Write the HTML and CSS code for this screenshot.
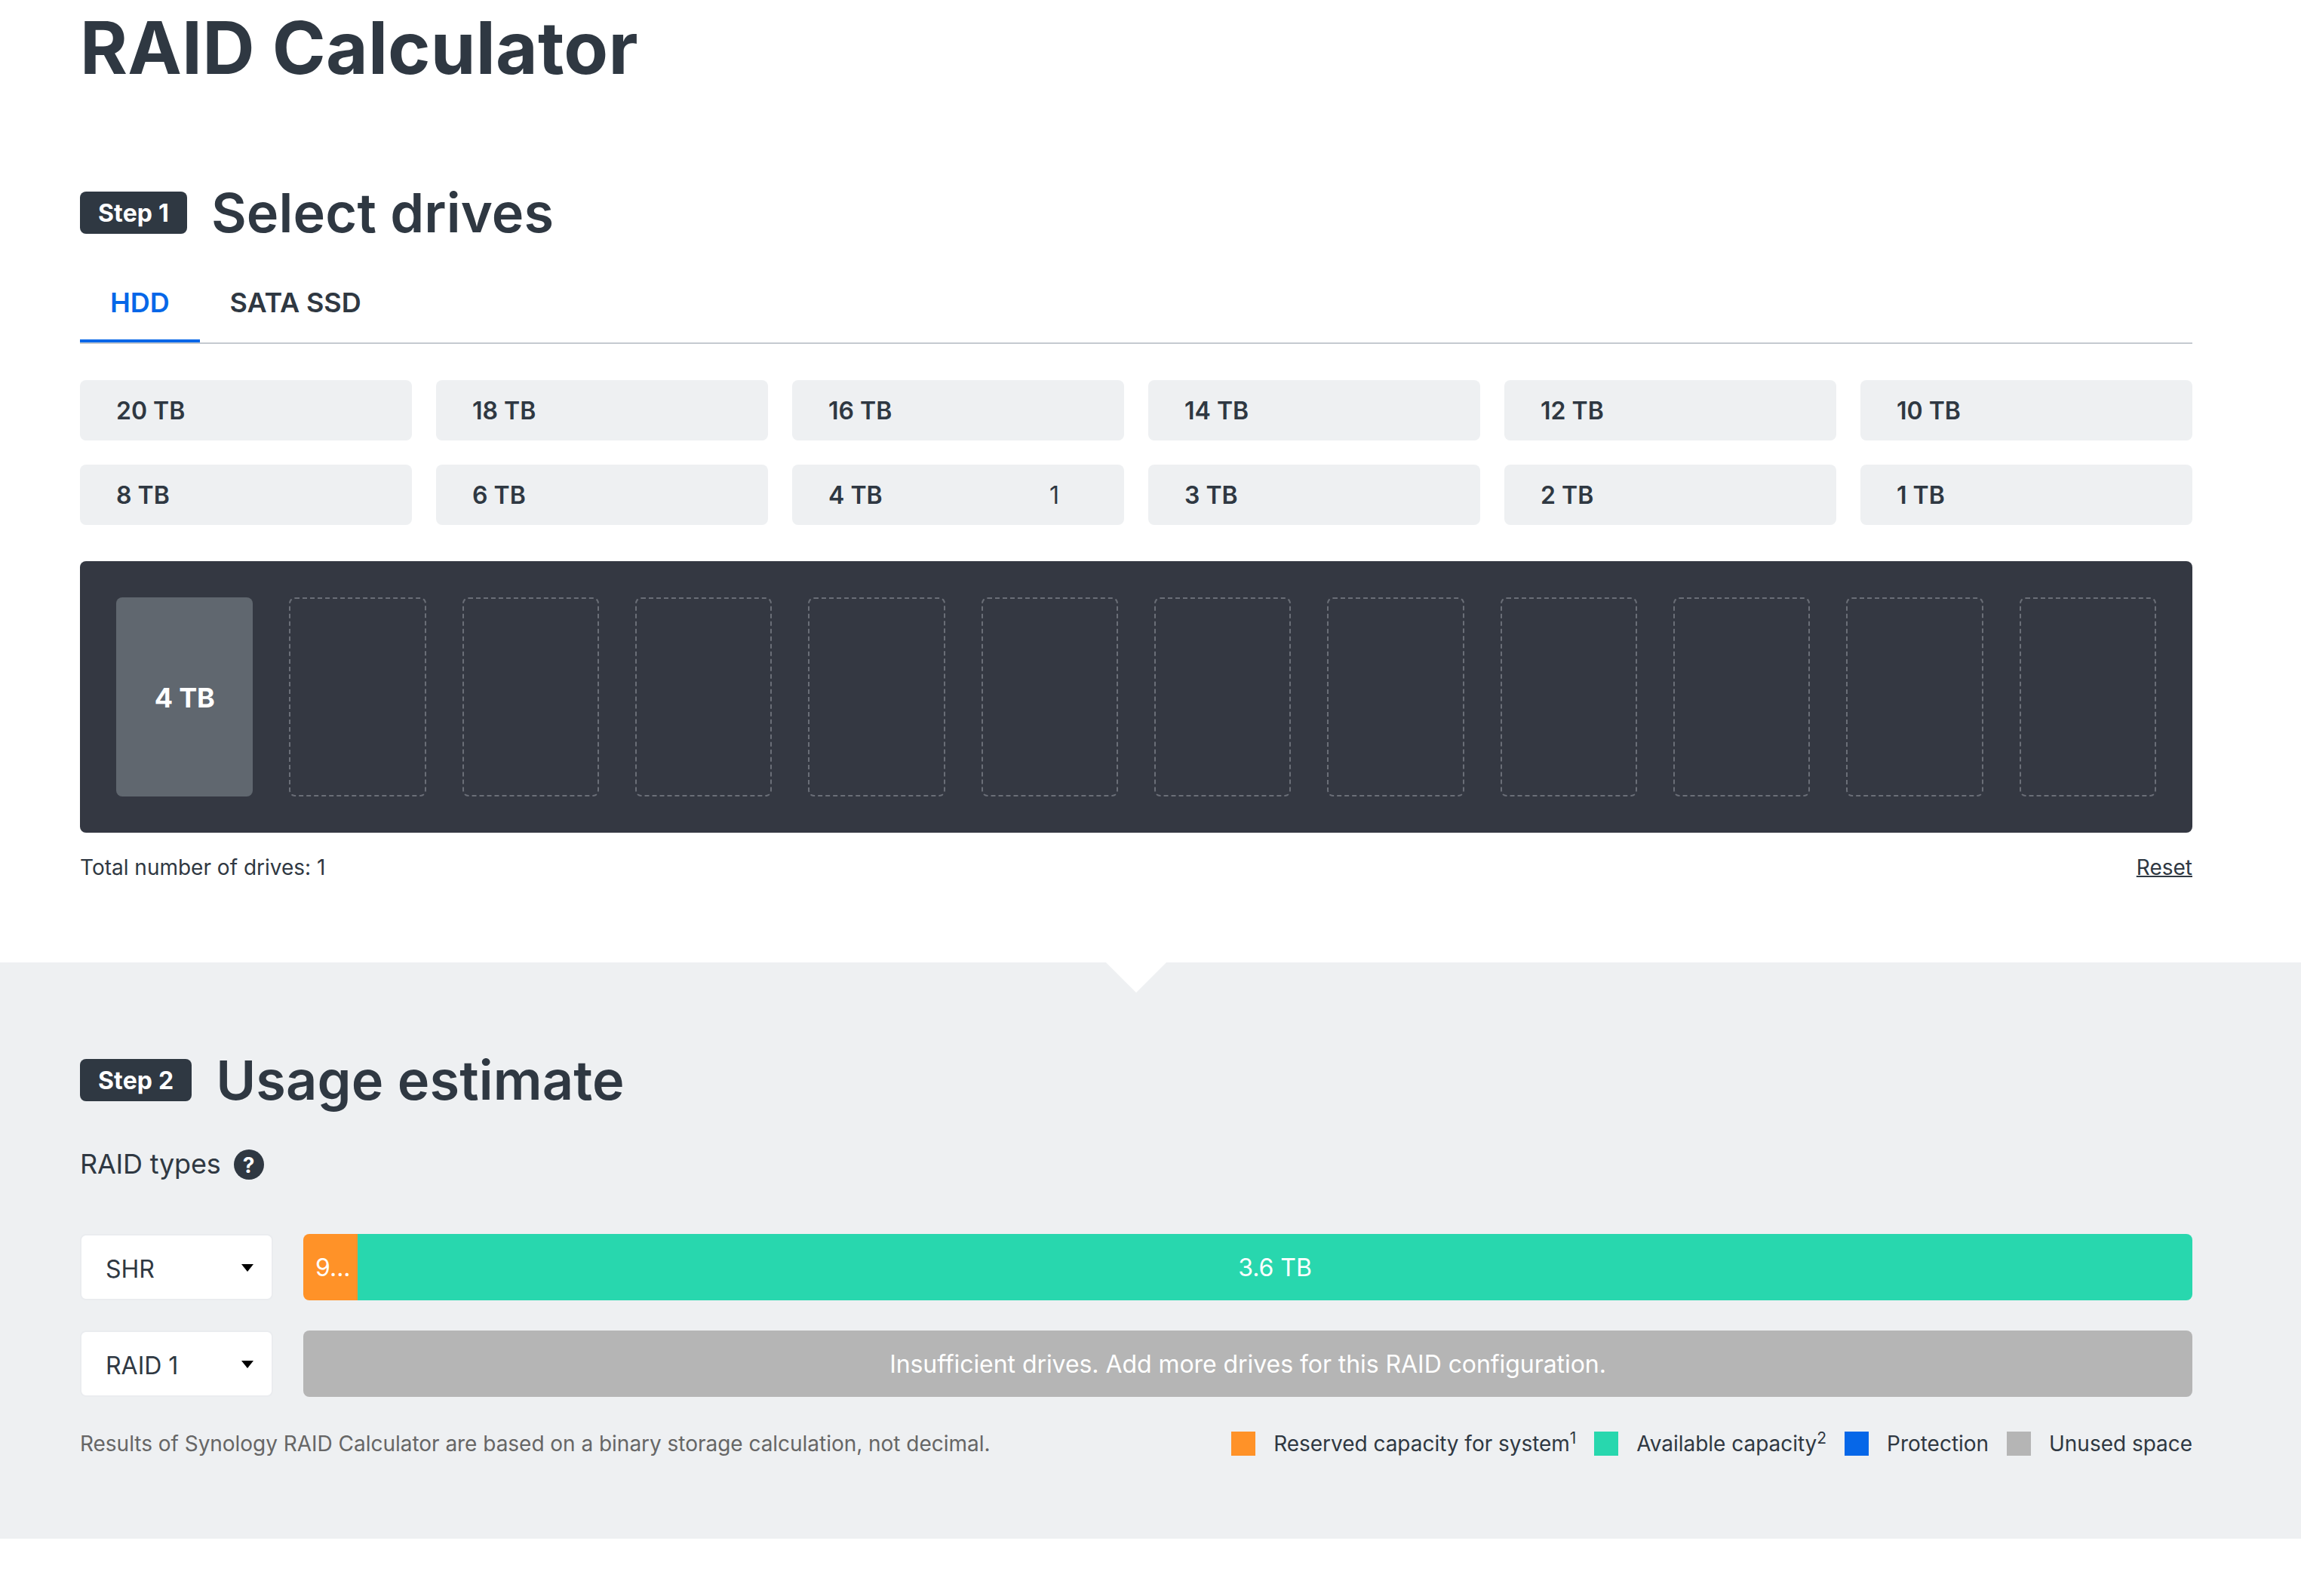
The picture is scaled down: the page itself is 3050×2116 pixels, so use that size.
FILE: index.html
```
<!DOCTYPE html>
<html lang="en">
<head>
    <meta charset="UTF-8">
    <meta name="viewport" content="width=device-width, initial-scale=1.0">
    <title>RAID Calculator</title>
    <link rel="stylesheet" href="styles.css">
</head>
<body>
    <!-- Step 1: drives -->
    <section class="drives">
        <div class="container">
            <h1>RAID Calculator</h1>
            <div class="step-title">
                <span class="step">Step 1</span>
                <h2>Select drives</h2>
            </div>
            <div class="tabs">
                <a class="tab active">HDD</a>
                <a class="tab">SATA SSD</a>
            </div>
            <div class="sizes">
                <button class="size">20 TB</button>
                <button class="size">18 TB</button>
                <button class="size">16 TB</button>
                <button class="size">14 TB</button>
                <button class="size">12 TB</button>
                <button class="size">10 TB</button>
                <button class="size">8 TB</button>
                <button class="size">6 TB</button>
                <button class="size">4 TB <span class="count">1</span></button>
                <button class="size">3 TB</button>
                <button class="size">2 TB</button>
                <button class="size">1 TB</button>
            </div>
            <div class="bays">
                <div class="bay filled">4 TB</div>
                <div class="bay"></div>
                <div class="bay"></div>
                <div class="bay"></div>
                <div class="bay"></div>
                <div class="bay"></div>
                <div class="bay"></div>
                <div class="bay"></div>
                <div class="bay"></div>
                <div class="bay"></div>
                <div class="bay"></div>
                <div class="bay"></div>
            </div>
            <div class="drives-footer">
                <span>Total number of drives: 1</span>
                <a class="reset">Reset</a>
            </div>
        </div>
    </section>

    <!-- Step 2: results -->
    <section class="usage">
        <div class="container">
            <div class="step-title">
                <span class="step">Step 2</span>
                <h2>Usage estimate</h2>
            </div>
            <div class="raid-types">
                <span>RAID types</span>
                <span class="help">?</span>
            </div>
            <div class="result">
                <div class="select">
                    <span>SHR</span>
                    <svg class="arrow" viewBox="0 0 16 10"><path d="M0 0h16L8 10z"/></svg>
                </div>
                <div class="bar">
                    <div class="part reserved" style="width: 72px">9...</div>
                    <div class="part available">3.6 TB</div>
                </div>
            </div>
            <div class="result">
                <div class="select">
                    <span>RAID 1</span>
                    <svg class="arrow" viewBox="0 0 16 10"><path d="M0 0h16L8 10z"/></svg>
                </div>
                <div class="bar">
                    <div class="part unused">Insufficient drives. Add more drives for this RAID configuration.</div>
                </div>
            </div>
            <div class="usage-footer">
                <p class="note">Results of Synology RAID Calculator are based on a binary storage calculation, not decimal.</p>
                <ul class="legend">
                    <li><i class="box reserved"></i><span>Reserved capacity for system<sup>1</sup></span></li>
                    <li><i class="box available"></i><span>Available capacity<sup>2</sup></span></li>
                    <li><i class="box protection"></i><span>Protection</span></li>
                    <li><i class="box unused"></i><span>Unused space</span></li>
                </ul>
            </div>
        </div>
    </section>
</body>
</html>
```
FILE: styles.css
```
* {
    box-sizing: border-box;
}

body {
    margin: 0;
    background-color: #fff;
    color: #2f3842;
    font-family: 'Inter', sans-serif;
    font-size: 32px;
}

.container {
    width: 2800px;
    margin-left: 106px;
}

h1 {
    margin: 0;
    padding-top: 5px;
    height: 254px;
    font-size: 96px;
    font-weight: 700;
    letter-spacing: 0.2px;
    line-height: 116px;
}

h2 {
    margin: 0;
    font-size: 72px;
    font-weight: 600;
    letter-spacing: 0.15px;
    line-height: 56px;
}

.step-title {
    display: flex;
    align-items: center;
    gap: 32px;
    height: 56px;
}

.step {
    padding: 1px 24px 0;
    border-radius: 8px;
    background-color: #2f3842;
    color: #fff;
    font-weight: 700;
    letter-spacing: 0.15px;
    line-height: 55px;
}

/* Tabs */
.tabs {
    display: flex;
    height: 106px;
    margin-top: 40px;
    border-bottom: 2px solid #c5cad0;
}

.tab {
    padding: 1px 40px 0;
    border-bottom: 4px solid transparent;
    font-size: 36px;
    font-weight: 600;
    letter-spacing: -0.1px;
    line-height: 101px;
    white-space: nowrap;
}

.tab.active {
    border-color: #0667e8;
    color: #0667e8;
}

/* Drive sizes */
.sizes {
    display: grid;
    grid-template-columns: repeat(6, 440px);
    gap: 32px;
    margin-top: 48px;
}

.size {
    display: flex;
    justify-content: space-between;
    align-items: center;
    height: 80px;
    padding: 0 86px 0 48px;
    border: none;
    border-radius: 8px;
    background-color: #eef0f2;
    color: inherit;
    font-family: inherit;
    font-size: 32px;
    font-weight: 600;
}

.count {
    font-weight: 400;
}

/* Drive bays */
.bays {
    display: grid;
    grid-template-columns: repeat(12, 1fr);
    gap: 48px;
    height: 360px;
    margin-top: 48px;
    padding: 48px;
    border-radius: 8px;
    background-color: #343842;
}

.bay {
    display: flex;
    justify-content: center;
    align-items: center;
    border: 2px dashed #6a6e77;
    border-radius: 8px;
}

.bay.filled {
    padding-top: 2px;
    border: none;
    background-color: #60676f;
    color: #fff;
    font-size: 36px;
    font-weight: 700;
    letter-spacing: -0.2px;
}

.drives-footer {
    display: flex;
    justify-content: space-between;
    height: 172px;
    padding-top: 29px;
    font-size: 28px;
    line-height: 34px;
}

.reset {
    text-decoration: underline;
    text-decoration-thickness: 2px;
}

/* Usage */
.usage {
    position: relative;
    height: 764px;
    padding-top: 128px;
    background-color: #eef0f2;
}

/* white notch on top of the section */
.usage::before {
    content: '';
    position: absolute;
    top: 0;
    left: 1466px;
    border: 40px solid transparent;
    border-top-color: #fff;
    border-bottom: none;
}

.raid-types {
    display: flex;
    align-items: center;
    gap: 17px;
    height: 40px;
    margin-top: 64px;
    margin-bottom: 72px;
    font-size: 36px;
    letter-spacing: -0.2px;
    line-height: 38px;
}

.raid-types span:first-child {
    padding-bottom: 2px;
}

.help {
    width: 40px;
    height: 40px;
    border-radius: 50%;
    background-color: #2f3842;
    color: #fff;
    font-size: 28px;
    font-weight: 700;
    line-height: 42px;
    text-align: center;
}

.result {
    display: flex;
    gap: 40px;
    height: 88px;
    margin-bottom: 40px;
}

.select {
    display: flex;
    justify-content: space-between;
    align-items: center;
    width: 256px;
    padding: 0 24px 0 32px;
    border: 2px solid #eaecef;
    border-radius: 8px;
    background-color: #fff;
}

.select span {
    padding-top: 4px;
}

.arrow {
    width: 16px;
    height: 10px;
    margin-top: 2px;
}

.bar {
    display: flex;
    flex: 1;
    border-radius: 8px;
    overflow: hidden;
    color: #fff;
    letter-spacing: -0.06px;
    line-height: 90px;
    text-align: center;
}

.available,
.part.unused {
    flex: 1;
}

.part.reserved {
    padding-left: 16px;
    text-align: left;
}

.reserved {
    background-color: #ff9228;
}

.available {
    background-color: #28d7ae;
}

.protection {
    background-color: #0667e8;
}

.unused {
    background-color: #b5b5b5;
}

/* Legend */
.usage-footer {
    display: flex;
    justify-content: space-between;
    align-items: center;
    height: 44px;
    font-size: 28px;
    letter-spacing: -0.03px;
}

.note {
    margin: 0;
    color: #666;
}

.legend {
    display: flex;
    gap: 24px;
    margin: 0;
    padding: 0;
    list-style: none;
}

.legend li {
    display: flex;
    align-items: center;
    gap: 24px;
}

.legend .box {
    flex: none;
    width: 32px;
    height: 32px;
}

sup {
    font-size: 21px;
    line-height: 0;
    vertical-align: 10px;
}
```
